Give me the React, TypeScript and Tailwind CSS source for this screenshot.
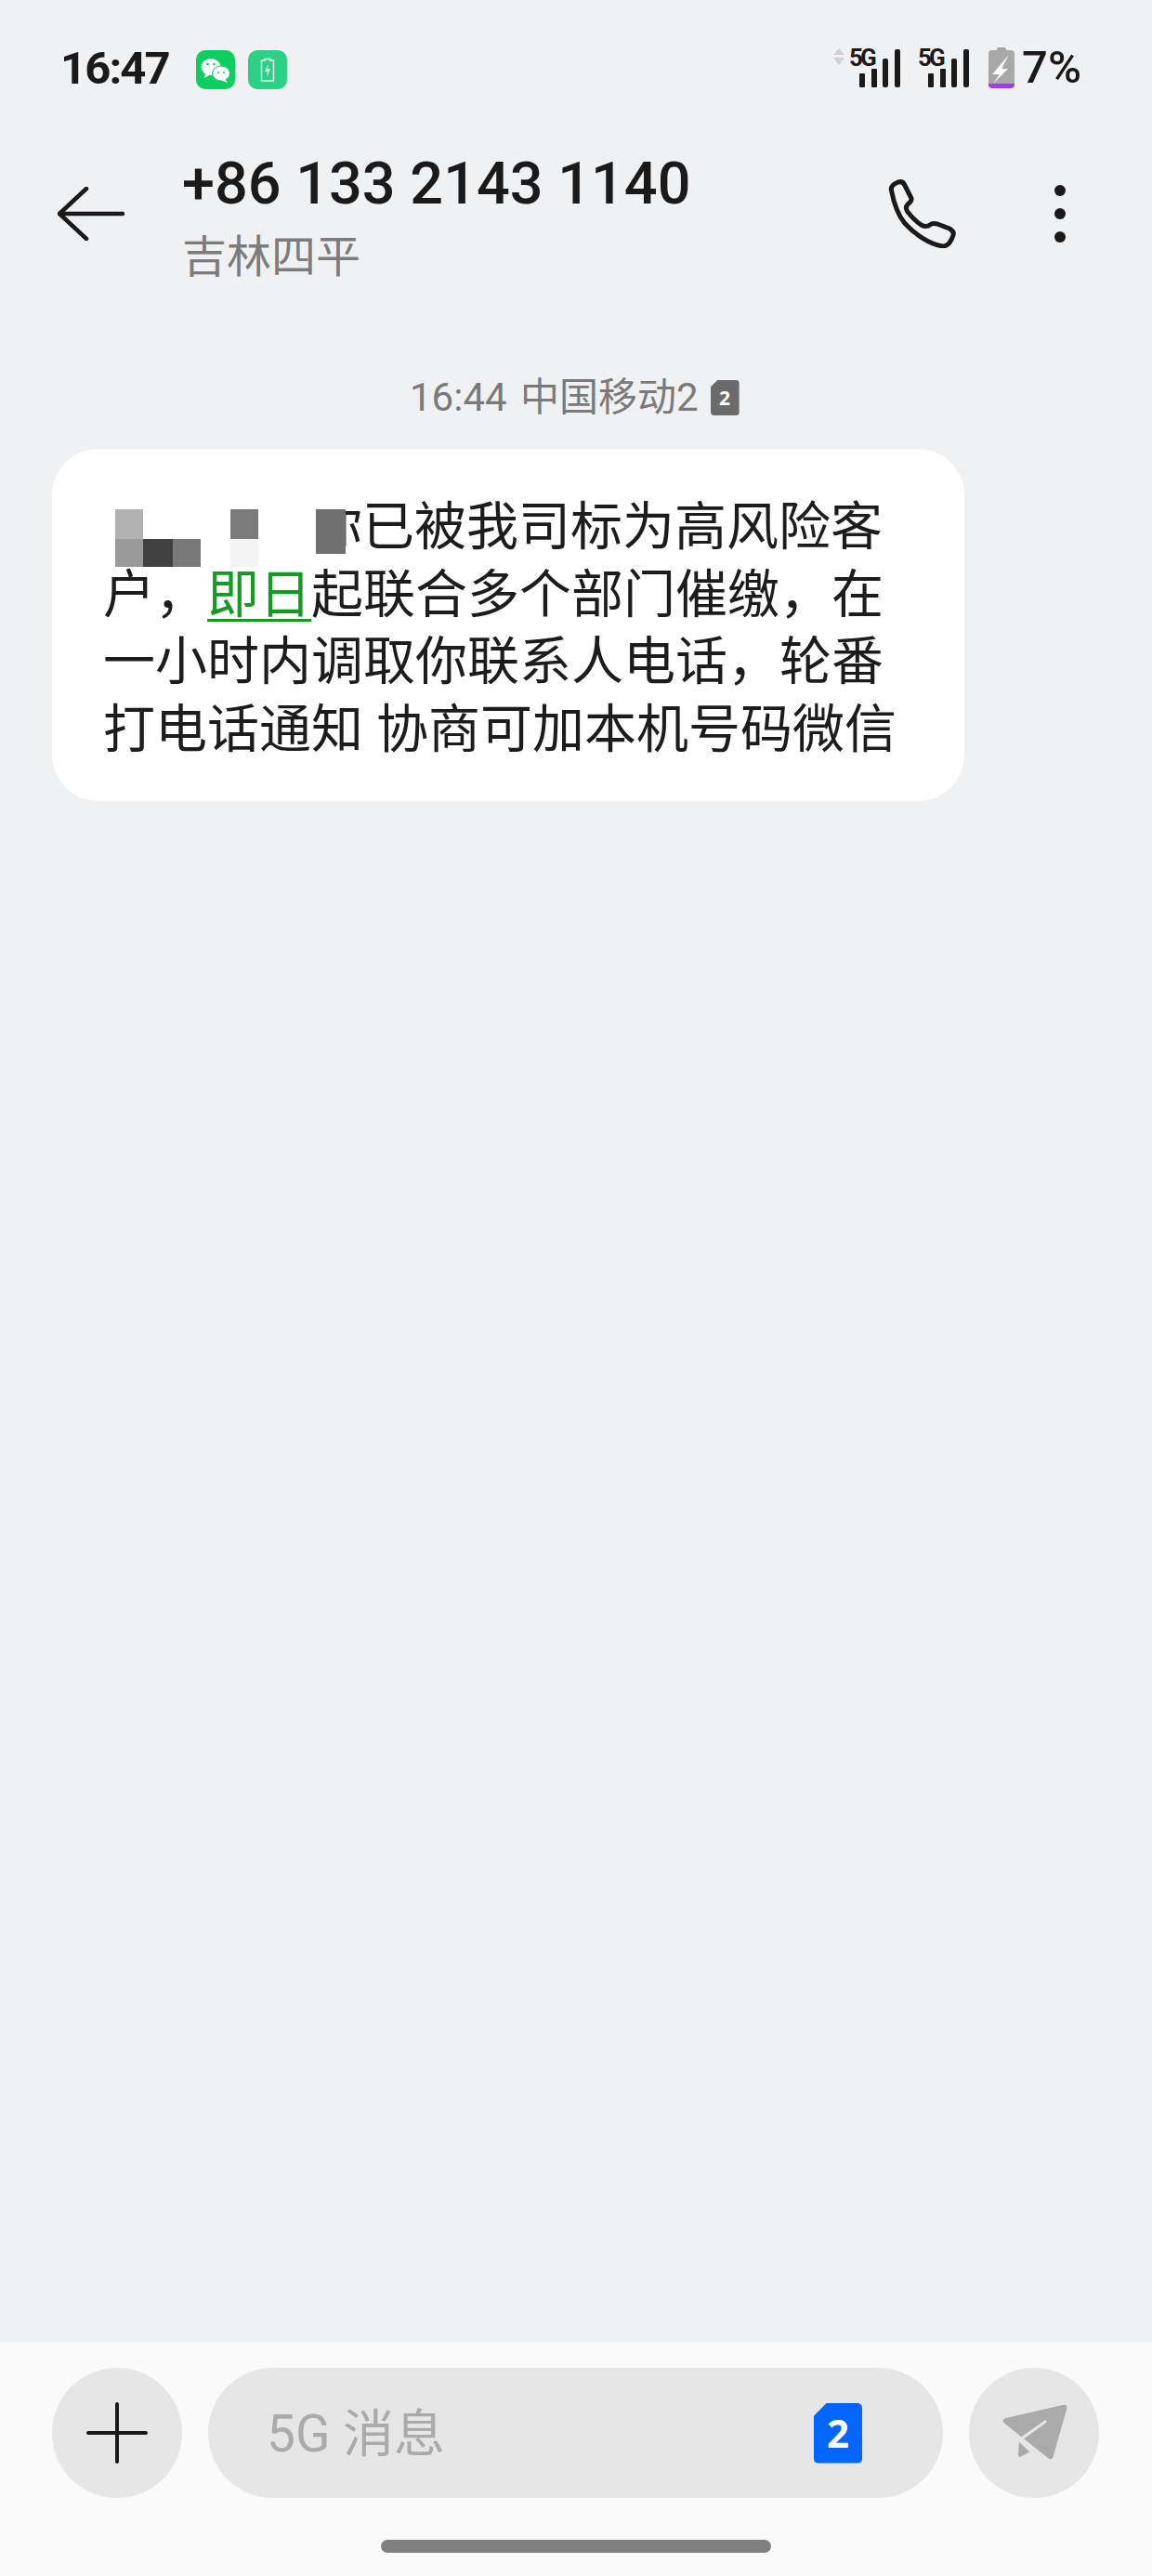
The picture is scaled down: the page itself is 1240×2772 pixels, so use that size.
import React from 'react';

const LATIN = "font-['Roboto','Noto_Sans_CJK_SC',sans-serif]";

const Signal: React.FC<{ arrows?: boolean }> = ({ arrows }) => (
  <div className="relative w-[55px] h-[42px]">
    {arrows && (
      <svg className="absolute left-[-17px] top-0" width="12" height="18" viewBox="0 0 12 18">
        <path d="M6 0 L12 7 L0 7 Z M0 10 L12 10 L6 18 Z" fill="#cfcfcf" />
      </svg>
    )}
    <span className="absolute left-0 top-[-3px] font-['Roboto',sans-serif] font-bold text-[26px] leading-[26px] tracking-[-3px] text-[#1a1a1a]">5G</span>
    <div className="absolute left-[11px] bottom-0 flex items-end gap-[6.6px]">
      <div className="w-[6px] h-[15px] bg-[#1a1a1a] rounded-[1px]" />
      <div className="w-[6px] h-[20px] bg-[#1a1a1a] rounded-[1px]" />
      <div className="w-[6px] h-[31px] bg-[#1a1a1a] rounded-[2px]" />
      <div className="w-[6px] h-[41px] bg-[#1a1a1a] rounded-[2px]" />
    </div>
  </div>
);

const Battery = () => (
  <svg width="28" height="44" viewBox="0 0 28 44">
    <path d="M9 2 Q9 0 11 0 H17 Q19 0 19 2 V3 H24 Q28 3 28 7 V39 H0 V7 Q0 3 4 3 H9 Z" fill="#a8a8a8" />
    <path d="M0 39 H28 V40 Q28 44 24 44 H4 Q0 44 0 40 Z" fill="#a23fd6" />
    <path d="M22 8 L4 29 L12 29 L5 39 L21 23 L14 23 Z" fill="#ffffff" />
  </svg>
);

const StatusBar = () => (
  <div className="flex items-center h-[146px] pl-[65px] pr-[76px] shrink-0">
    <span className="w-[146px] font-['Roboto',sans-serif] font-bold text-[49px] leading-[50px] tracking-[-1.9px] text-[#1a1a1a] mt-[1px]">16:47</span>
    <div className="flex items-center gap-[14px] mt-[4px]">
      <div className="w-[42px] h-[42px] rounded-[10px] bg-[#0dcf60]">
        <svg width="42" height="42" viewBox="0 0 42 42">
          <ellipse cx="16" cy="18" rx="10.5" ry="9" fill="#fff" />
          <path d="M10 24 L9 30 L16 26 Z" fill="#fff" />
          <ellipse cx="27" cy="25" rx="9.5" ry="8" fill="#fff" stroke="#0dcf60" strokeWidth="1" />
          <path d="M31 31 L34 35 L26 32 Z" fill="#fff" />
          <circle cx="12.5" cy="15" r="1.3" fill="#0dcf60" />
          <circle cx="19.5" cy="15" r="1.3" fill="#0dcf60" />
          <circle cx="24" cy="24" r="1.1" fill="#0dcf60" />
          <circle cx="30" cy="24" r="1.1" fill="#0dcf60" />
        </svg>
      </div>
      <div className="w-[42px] h-[42px] rounded-[10px] bg-[#2dd186] flex items-center justify-center">
        <svg width="16" height="26" viewBox="0 0 16 26">
          <path d="M5 1.5 H11 V3 H14.5 V25 H1.5 V3 H5 Z" fill="none" stroke="#e8fff4" strokeWidth="1.4" />
          <path d="M9 7 L5 15 H8 L7 21 L11 12 H8 Z" fill="#e8fff4" />
        </svg>
      </div>
    </div>
    <div className="flex-1" />
    <Signal arrows />
    <div className="ml-[19px]">
      <Signal />
    </div>
    <div className="ml-[21px]"><Battery /></div>
    <span className="ml-[8px] font-['Roboto',sans-serif] font-medium text-[49px] leading-[46px] text-[#1a1a1a]">7%</span>
  </div>
);

const Header = () => (
  <div className="flex items-start h-[174px] pl-[62px] pr-[92px] shrink-0">
    <div className="pt-[55px]">
      <svg width="72" height="58" viewBox="0 0 72 58" className="block">
        <path d="M2 29 H70 M31 2 L2 29 L31 56" fill="none" stroke="#1a1a1a" strokeWidth="4.5" strokeLinecap="round" strokeLinejoin="round" />
      </svg>
    </div>
    <div className="flex-1 pt-[16px] pl-[62px]">
      <div className={`${LATIN} font-medium text-[63px] leading-[72px] text-[#1a1a1a]`}>+86 133 2143 1140</div>
      <div className={`${LATIN} text-[48px] leading-[50px] text-[#7c7c7c] mt-[18px]`}>吉林四平</div>
    </div>
    <div className="pt-[47px] mr-[106px] ml-[-2px]">
      <svg width="73" height="74" viewBox="0 0 73 74" fill="none" className="block">
        <path d="M3.5 12 C2.4 8 6 5 10.6 3 C14 2 16.5 3 17.7 6 L24.8 20 C26 23 23.6 25 21 27 C19 29 19 32 21 35 C25 40 29.5 45 35.4 49 C39 51 42.5 51 45 49 C47 47 49.6 47 53 48 L66 53 C69.6 55 71 57 70 60 C68.4 65 65 72 59 72 C45 70 29.5 60 17.7 47 C9.4 37 6 25 3.5 12 Z" stroke="#1a1a1a" strokeWidth="5" strokeLinejoin="round" />
      </svg>
    </div>
    <div className="flex flex-col gap-[13px] pt-[53px] mr-[1px]">
      <div className="w-[12px] h-[12px] rounded-full bg-[#1a1a1a]" />
      <div className="w-[12px] h-[12px] rounded-full bg-[#1a1a1a]" />
      <div className="w-[12px] h-[12px] rounded-full bg-[#1a1a1a]" />
    </div>
  </div>
);

const Bubble = () => (
  <div className="relative ml-[56px] w-[982px] h-[379px] mt-[33px] bg-white rounded-[50px] pl-[55px] pt-[48px]">
    {/* white patches left by the screenshot's redaction */}
    <div className="absolute left-0 top-[97px] w-[6px] h-[60px] bg-white" />
    <div className="absolute left-[6px] top-[35px] w-[50px] h-[62px] bg-white" />
    <div className="absolute left-[36px] top-[3px] w-[260px] h-[40px] bg-white" />
    <div className={`${LATIN} text-[56px] leading-[72.5px] text-[#1c1c1c] whitespace-nowrap`}>
      <div className="pl-[223px]">你已被我司标为高风险客</div>
      <div>
        户，<span className="text-[#149a25] underline decoration-[3px] underline-offset-[7px]">即日</span>起联合多个部门催缴，在
      </div>
      <div>一小时内调取你联系人电话，轮番</div>
      <div>打电话通知 协商可加本机号码微信</div>
    </div>
    <div className="absolute left-[272px] top-[50px] w-[44px] h-[15px] bg-white" />
    <div className="absolute left-[272px] top-[65px] w-[12px] h-[55px] bg-white" />
    <div className="absolute left-[68px] top-[65px] w-[30px] h-[32px] bg-[#b2b2b2]" />
    <div className="absolute left-[68px] top-[97px] w-[30px] h-[30px] bg-[#9a9a9a]" />
    <div className="absolute left-[98px] top-[97px] w-[32px] h-[30px] bg-[#414141]" />
    <div className="absolute left-[130px] top-[97px] w-[30px] h-[30px] bg-[#787878]" />
    <div className="absolute left-[192px] top-[65px] w-[30px] h-[32px] bg-[#7a7a7a]" />
    <div className="absolute left-[192px] top-[97px] w-[30px] h-[30px] bg-[#f3f3f3]" />
    <div className="absolute left-[284px] top-[65px] w-[32px] h-[48px] bg-[#707070]" />
  </div>
);

const InputBar = () => (
  <div className="h-[252px] bg-[#fafafa] pt-[28px] shrink-0">
    <div className="flex pl-[56px]">
      <div className="w-[140px] h-[140px] rounded-full bg-[#e6e6e6] flex items-center justify-center">
        <svg width="66" height="66" viewBox="0 0 66 66">
          <path d="M2 33 H64 M33 2 V64" stroke="#1a1a1a" strokeWidth="4" strokeLinecap="round" />
        </svg>
      </div>
      <div className="ml-[28px] w-[791px] h-[140px] rounded-full bg-[#e6e6e6] flex items-center pl-[63px] pr-[87px]">
        <span className={`${LATIN} text-[55px] text-[#ababab] flex-1 mt-[2px]`}>5G 消息</span>
        <div className="w-[52px] h-[65px] bg-[#0066ff] rounded-[5px] [clip-path:polygon(27%_0,100%_0,100%_100%,0_100%,0_22%)] flex items-center justify-center">
          <span className="font-['Noto_Sans',sans-serif] font-bold text-[42px] leading-none text-white">2</span>
        </div>
      </div>
      <div className="ml-[28px] w-[140px] h-[140px] rounded-full bg-[#e6e6e6] flex items-center justify-center">
        <svg width="71" height="62" viewBox="0 0 71 62">
          <path d="M5 15 L66 1 Q71 0 70.5 4 L55.5 57 Q54 61 50 58 L2.4 20 Q0 17 5 15 Z" fill="#aaaaaa" />
          <path d="M19 39 L18 54 Q18 58 22 56 L33 50 Z" fill="#aaaaaa" />
          <path d="M47 19 L19 39 L32 51" fill="none" stroke="#e6e6e6" strokeWidth="3" strokeLinecap="round" />
        </svg>
      </div>
    </div>
    <div className="ml-[410px] mt-[45px] w-[420px] h-[14px] rounded-[7px] bg-[#808080]" />
  </div>
);

export default function App() {
  return (
    <div className="w-[1240px] h-[2772px] bg-[#f0f1f3] flex flex-col overflow-hidden">
      <StatusBar />
      <Header />
      <div className="flex-1">
        <div className="flex items-center h-[44px] mt-[86px] pl-[441px]">
          <span className={`${LATIN} text-[42px] leading-[44px] text-[#7a7a7a] [word-spacing:4px]`}>16:44 中国移动2</span>
          <div className="ml-[13px] w-[31px] h-[38px] rounded-[4px] bg-[#6b6b6b] [clip-path:polygon(25%_0,100%_0,100%_100%,0_100%,0_20%)] flex items-center justify-center">
            <span className="font-['Noto_Sans',sans-serif] font-bold text-[21px] leading-none text-white">2</span>
          </div>
        </div>
        <Bubble />
      </div>
      <InputBar />
    </div>
  );
}
